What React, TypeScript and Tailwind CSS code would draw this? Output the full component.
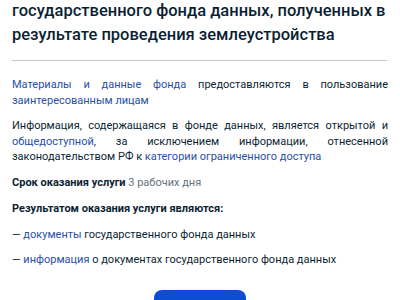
export default function App() {
  const link = 'text-[#2850a8]';

  return (
    <div className="w-[400px] h-[300px] overflow-hidden bg-white text-[#0b1f33] font-['Roboto',sans-serif]">
      <div className="px-3">
        <h1 className="-mt-px text-[16.5px] leading-6 font-medium">
          государственного фонда данных, полученных в результате проведения землеустройства
        </h1>
        <div className="mt-[13px] h-px bg-[#c4c8cc] mr-[1px]" />

        <div className="mt-[16px] text-[11px] leading-[15.5px] text-justify">
          <p>
            <span className={link}>Материалы и данные фонда</span> предоставляются в пользование{' '}
            <span className={link}>заинтересованным лицам</span>
          </p>
          <p className="mt-[10px]">
            Информация, содержащаяся в фонде данных, является открытой и{' '}
            <span className={link}>общедоступной</span>, за исключением информации, отнесенной
            законодательством РФ к <span className={link}>категории ограниченного доступа</span>
          </p>
          <p className="mt-[10px]">
            <span className="font-bold">Срок оказания услуги</span>{' '}
            <span className="text-[#66727f]">3 рабочих дня</span>
          </p>
          <p className="mt-[11px] font-bold">Результатом оказания услуги являются:</p>
          <p className="mt-[10px]">
            — <span className={link}>документы</span> государственного фонда данных
          </p>
          <p className="mt-[10px]">
            — <span className={link}>информация</span> о документах государственного фонда данных
          </p>
        </div>

        <div className="mt-[22px] flex justify-center">
          <button className="w-[92px] h-[40px] rounded-lg bg-[#0d4cd3]" />
        </div>
      </div>
    </div>
  );
}
